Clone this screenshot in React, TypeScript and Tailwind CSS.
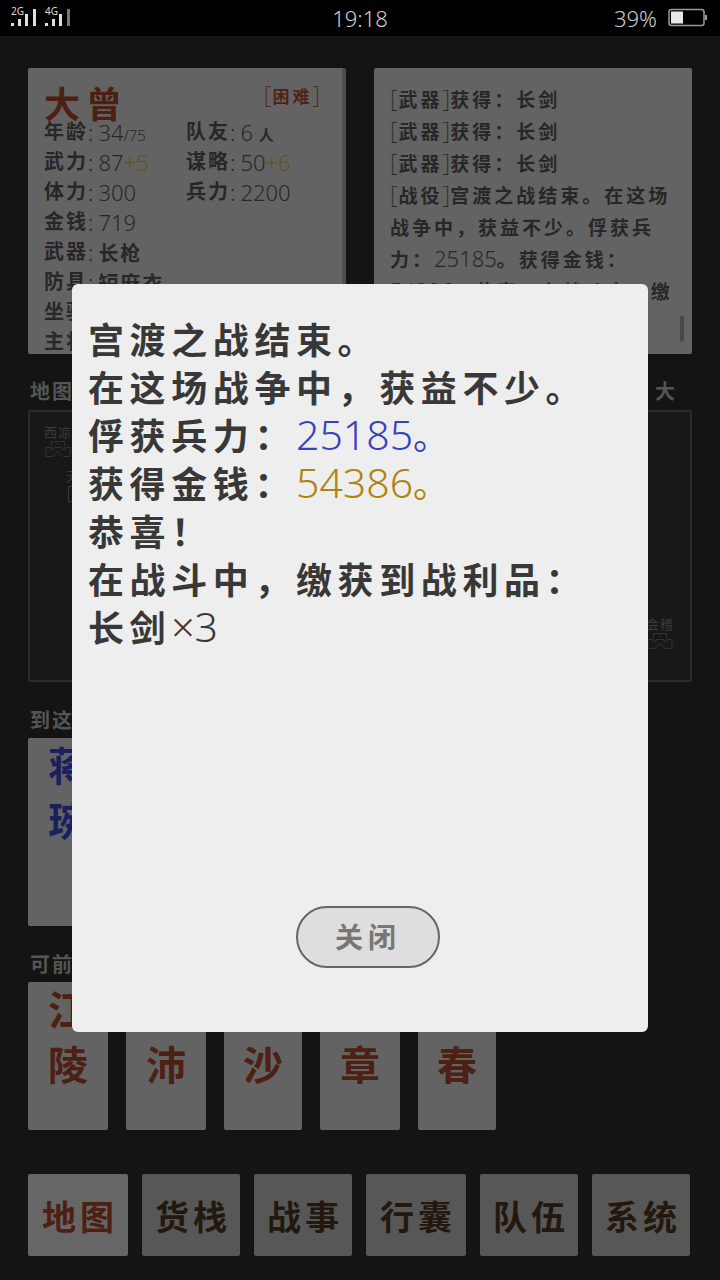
import type { ReactNode } from "react";

const Num = ({ children, className = "" }: { children: ReactNode; className?: string }) => (
  <span className={`leading-[0] font-light tracking-normal ${className}`}>{children}</span>
);

const Stat = ({ label, children }: { label: string; children: ReactNode }) => (
  <div className="flex h-[30px] items-center">
    <span className="font-bold tracking-[2px]">{label}</span>
    <Num className="mr-[5px] text-[22px]">:</Num>
    <span className="text-[22px]">{children}</span>
  </div>
);

const Tag = ({ children }: { children: ReactNode }) => (
  <span>
    <span className="text-[24px] leading-[0] font-extralight tracking-[1px]">[</span>
    <span className="font-bold">{children}</span>
    <span className="text-[24px] leading-[0] font-extralight tracking-normal">]</span>
  </span>
);

const Castle = () => (
  <svg width="26" height="18" viewBox="0 0 26 18" fill="none" stroke="#333" strokeWidth="1">
    <path d="M6.5 6.5V1.5H19.5V6.5M1 7.5H6V9.5H9V7.5H17V9.5H20V7.5H25V16.5H18L13 11L8 16.5H1Z" />
    <path d="M12 4H14" />
  </svg>
);

const Signal = ({ label }: { label: string }) => (
  <div className="relative h-[20px] w-[30px]">
    <span className="absolute -top-[4px] left-0 text-[10px] font-normal text-[#dddddd]">{label}</span>
    <svg className="absolute top-0 left-0" width="30" height="20" viewBox="0 0 30 20">
      <rect x="0" y="15" width="3" height="3" fill="#e0e0e0" />
      <rect x="7" y="11" width="3" height="7" fill="#e0e0e0" />
      <rect x="14" y="6" width="3" height="12" fill="#e0e0e0" />
      <rect x="22" y="1" width="3" height="17" fill={label === "4G" ? "#777777" : "#e0e0e0"} />
    </svg>
  </div>
);

const StatusBar = () => (
  <div className="flex h-9 shrink-0 items-center bg-black px-[11px] text-[#cfcfcf]">
    <div className="flex flex-1 gap-[4px]">
      <Signal label="2G" />
      <Signal label="4G" />
    </div>
    <span className="text-[22px] font-light">19:18</span>
    <div className="flex flex-1 items-center justify-end">
      <span className="mr-[11px] text-[22px] font-light">39%</span>
      <svg width="40" height="20" viewBox="0 0 40 20" className="mr-[1px]">
        <rect x="1" y="1.5" width="35" height="16" rx="2.5" fill="none" stroke="#9a9a9a" strokeWidth="1.5" />
        <rect x="3" y="3.5" width="12" height="12" fill="#e8e8e8" />
        <rect x="37" y="7" width="2" height="5" fill="#9a9a9a" />
      </svg>
    </div>
  </div>
);

const HeroPanel = () => (
  <div className="relative h-[286px] w-[318px] overflow-hidden rounded-[2px] border-r-4 border-[#4e4e4e] bg-[#636363] px-4 pt-4 text-[20px] leading-none text-[#272727]">
    <div className="flex h-[33px] items-start justify-between pr-[6px]">
      <span className="text-[36px] leading-[42px] font-bold tracking-[6px] text-[#4c2012]">大曾</span>
      <span className="pt-[4px] text-[17px] tracking-[3px] text-[#4f2416]">
        <Tag>困难</Tag>
      </span>
    </div>
    <div className="grid grid-cols-[142px_1fr]">
      <Stat label="年龄">
        <Num>34</Num>
        <Num className="text-[15px]">/75</Num>
      </Stat>
      <Stat label="队友">
        <Num>6</Num> <span className="text-[15px] font-bold">人</span>
      </Stat>
      <Stat label="武力">
        <Num>87</Num>
        <Num className="text-[#5f5326]">+5</Num>
      </Stat>
      <Stat label="谋略">
        <Num>50</Num>
        <Num className="text-[#5f5326]">+6</Num>
      </Stat>
      <Stat label="体力">
        <Num>300</Num>
      </Stat>
      <Stat label="兵力">
        <Num>2200</Num>
      </Stat>
    </div>
    <Stat label="金钱">
      <Num>719</Num>
    </Stat>
    <Stat label="武器">
      <span className="text-[20px] font-bold tracking-[2px]">长枪</span>
    </Stat>
    <Stat label="防具">
      <span className="text-[20px] font-bold tracking-[2px]">短麻衣</span>
    </Stat>
    <Stat label="坐骑">
      <span className="text-[20px] font-bold tracking-[2px]">无</span>
    </Stat>
    <Stat label="主将">
      <span className="text-[20px] font-bold tracking-[2px]">无</span>
    </Stat>
  </div>
);

const LogPanel = () => (
  <div className="relative h-[286px] w-[318px] overflow-hidden rounded-[2px] bg-[#636363] pt-4 pr-[14px] pl-4 text-[19px] leading-[32px] font-bold tracking-[3px] text-[#272727]">
    <div><Tag>武器</Tag>获得：长剑</div>
    <div><Tag>武器</Tag>获得：长剑</div>
    <div><Tag>武器</Tag>获得：长剑</div>
    <div>
      <Tag>战役</Tag>宫渡之战结束。在这场战争中，获益不少。俘获兵力：
      <Num className="text-[22px]">25185</Num>。获得金钱：
      <Num className="text-[22px]">54386</Num>。恭喜！在战斗中，缴获到战利品：长剑×3
    </div>
    <div className="absolute top-[248px] right-2 h-[26px] w-1 rounded-full bg-[#484848]" />
  </div>
);

const MapArea = () => (
  <div className="mt-[28px]">
    <div className="flex justify-between pr-[15px] pb-2 pl-[2px] text-[20px] leading-[20px] font-bold tracking-[2px] text-[#555555]">
      <span>地图</span>
      <span>大</span>
    </div>
    <div className="relative h-[272px] rounded-[2px] border-2 border-[#2c2c2c] bg-[#181818]">
      <div className="absolute top-[12px] left-[14px] flex flex-col items-center text-[13px] leading-[16px] text-[#3a3a3a]">
        <span className="tracking-[1px]">西凉</span>
        <Castle />
      </div>
      <div className="absolute top-[56px] left-[36px] text-[13px] leading-[16px] text-[#3a3a3a]">天水</div>
      <div className="absolute top-[74px] left-[38px] h-[16px] w-[12px] border border-[#3a3a3a]" />
      <div className="absolute right-[16px] bottom-[30px] flex flex-col items-center text-[13px] leading-[16px] text-[#3a3a3a]">
        <span className="tracking-[1px]">会稽</span>
        <Castle />
      </div>
    </div>
  </div>
);

const Nearby = ({ title, children }: { title: string; children: ReactNode }) => (
  <div className="mt-[28px]">
    <div className="pb-[6px] pl-[2px] text-[20px] leading-[22px] font-bold tracking-[2px] text-[#555555]">{title}</div>
    {children}
  </div>
);

const Card = ({ name, w = "w-20", h = "h-[148px]", color = "text-[#4c2012]" }: { name: string; w?: string; h?: string; color?: string }) => (
  <div className={`${w} ${h} rounded-[2px] bg-[#636363] text-center text-[40px] leading-[55px] font-bold ${color}`}>
    {name.split("").map((c, i) => (
      <div key={i}>{c}</div>
    ))}
  </div>
);

const navItems = [
  { name: "地图", w: "w-[100px]", active: true },
  { name: "货栈", w: "w-[98px]" },
  { name: "战事", w: "w-[98px]" },
  { name: "行囊", w: "w-[100px]" },
  { name: "队伍", w: "w-[98px]" },
  { name: "系统", w: "w-[98px]" },
];

const BottomNav = () => (
  <div className="mt-[44px] flex gap-[14px]">
    {navItems.map((item) => (
      <div
        key={item.name}
        className={`flex h-[82px] items-center justify-center rounded-[2px] pt-1 text-[34px] font-bold tracking-[4px] ${item.w} ${
          item.active ? "bg-[#666666] text-[#4c2012]" : "bg-[#575757] text-[#22180e]"
        }`}
      >
        <span className="mr-[-4px]">{item.name}</span>
      </div>
    ))}
  </div>
);

const ResultDialog = () => (
  <div className="absolute top-[284px] left-[72px] flex h-[748px] w-[576px] flex-col rounded-[6px] bg-[#eeeeee] pt-[33px] pb-[64px] pl-4 text-[36px] leading-[48px] font-bold tracking-[5.6px] text-[#383838]">
    <div>宫渡之战结束。</div>
    <div>在这场战争中，获益不少。</div>
    <div>
      俘获兵力：<Num className="text-[41px] text-[#3543bd]">25185</Num>
      <span className="font-normal text-[#3543bd]">。</span>
    </div>
    <div>
      获得金钱：<Num className="text-[41px] text-[#ae8410]">54386</Num>
      <span className="font-normal text-[#ae8410]">。</span>
    </div>
    <div>恭喜！</div>
    <div>在战斗中，缴获到战利品：</div>
    <div>
      长剑<Num className="text-[41px]">×3</Num>
    </div>
    <button className="mt-auto ml-[208px] flex h-[62px] w-[144px] items-center justify-center rounded-full border-2 border-[#666666] bg-[#dedede] text-[28px] font-bold tracking-[5px] text-[#777777]">
      关闭
    </button>
  </div>
);

export default function App() {
  return (
    <div className="relative flex h-[1280px] w-[720px] flex-col overflow-hidden bg-[#141414] font-['Noto_Sans','Noto_Sans_CJK_SC',sans-serif]">
      <StatusBar />
      <div className="px-7 pt-8">
        <div className="flex gap-7">
          <HeroPanel />
          <LogPanel />
        </div>
        <MapArea />
        <Nearby title="到这">
          <Card name="蒋琬" h="h-[188px]" color="text-[#1a1f5e]" />
        </Nearby>
        <Nearby title="可前">
          <div className="flex gap-[18px]">
            <Card name="江陵" />
            <Card name="小沛" />
            <Card name="长沙" w="w-[78px]" />
            <Card name="豫章" />
            <Card name="寿春" w="w-[78px]" />
          </div>
        </Nearby>
        <BottomNav />
      </div>
      <ResultDialog />
    </div>
  );
}
